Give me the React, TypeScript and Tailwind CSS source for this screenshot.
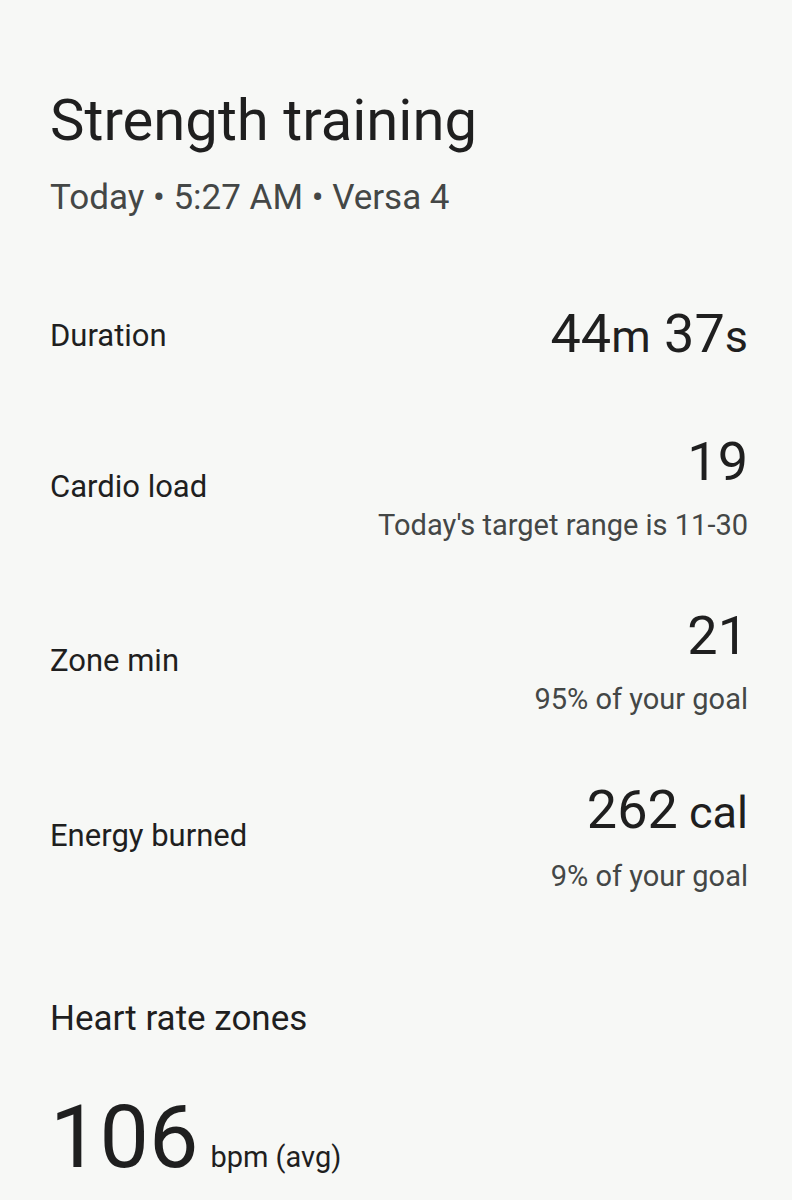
import React from 'react';

type Stat = {
  label: string;
  value: string;
  unit?: string;
  value2?: string;
  unit2?: string;
  note?: string;
};

const stats: Stat[] = [
  { label: 'Duration', value: '44', unit: 'm', value2: '37', unit2: 's' },
  { label: 'Cardio load', value: '19', note: "Today's target range is 11-30" },
  { label: 'Zone min', value: '21', note: '95% of your goal' },
  { label: 'Energy burned', value: '262', unit: ' cal', note: '9% of your goal' },
];

function StatRow({ stat }: { stat: Stat }) {
  return (
    <div className="flex items-center justify-between">
      <span className="text-[31px] leading-[36px] text-[#1f1f1f]">{stat.label}</span>
      <div className="flex flex-col items-end">
        <div className="text-[54px] leading-[64px] text-[#1f1f1f] whitespace-pre">
          {stat.value}
          {stat.unit && <span className="text-[45px]">{stat.unit}</span>}
          {stat.value2 && (
            <>
              {' '}
              {stat.value2}
              <span className="text-[45px]">{stat.unit2}</span>
            </>
          )}
        </div>
        {stat.note && (
          <div className="mt-[13px] text-[29px] leading-[36px] text-[#444746]">{stat.note}</div>
        )}
      </div>
    </div>
  );
}

export default function App() {
  return (
    <div
      className="min-h-screen bg-[#f7f8f6] pl-[50px] pr-[44px] pt-[86px]"
      style={{ fontFamily: 'Roboto, "Noto Sans", sans-serif' }}
    >
      <h1 className="text-[58px] leading-[68px] text-[#1f1f1f]">Strength training</h1>
      <p className="mt-[22px] text-[35px] leading-[44px] text-[#444746]">
        Today • 5:27 AM • Versa 4
      </p>

      <div className="mt-[82px] flex flex-col gap-[61px]">
        {stats.map((s) => (
          <StatRow key={s.label} stat={s} />
        ))}
      </div>

      <h2 className="mt-[105px] text-[35px] leading-[40px] text-[#1f1f1f]">Heart rate zones</h2>
      <div className="mt-[48px] flex items-baseline gap-[12px]">
        <span className="text-[88px] leading-[100px] text-[#1f1f1f]">106</span>
        <span className="text-[29px] leading-[36px] text-[#1f1f1f]">bpm (avg)</span>
      </div>
    </div>
  );
}
